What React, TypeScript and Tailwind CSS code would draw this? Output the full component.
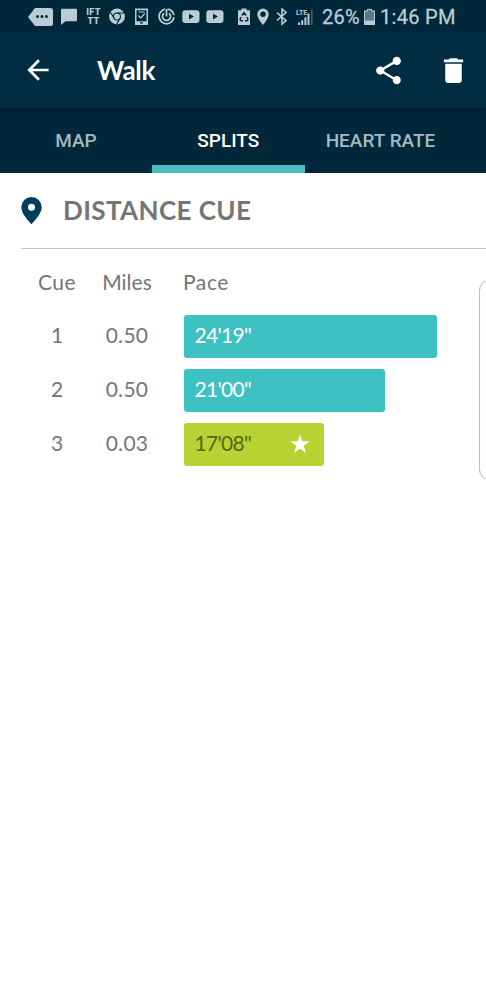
import type { ReactNode } from 'react'

type Split = {
  cue: number
  miles: string
  pace: string
  width: number
  best?: boolean
}

const splits: Split[] = [
  { cue: 1, miles: '0.50', pace: `24'19"`, width: 253 },
  { cue: 2, miles: '0.50', pace: `21'00"`, width: 201 },
  { cue: 3, miles: '0.03', pace: `17'08"`, width: 140.5, best: true },
]

const tabs = ['MAP', 'SPLITS', 'HEART RATE']

function StatusIcon({ w, className, children }: { w: number; className: string; children: ReactNode }) {
  return (
    <svg width={w} height={18} viewBox={`0 0 ${w} 18`} className={`shrink-0 ${className}`} fill="currentColor">
      {children}
    </svg>
  )
}

function YoutubeIcon({ className }: { className: string }) {
  return (
    <StatusIcon w={18} className={className}>
      <rect x="0.3" y="2.3" width="17.2" height="12.7" rx="3" />
      <path d="M7 5.8v5.6l5-2.8z" fill="#00283c" />
    </StatusIcon>
  )
}

function StatusBar() {
  return (
    <div className="flex h-[33px] items-center bg-[#00273a] pl-[28px] font-['Roboto',sans-serif] text-[#bacbd5]">
      <StatusIcon w={25} className="">
        <path d="M7 0h15.5A2.5 2.5 0 0 1 25 2.5v13a2.5 2.5 0 0 1-2.5 2.5H7L0 9z" />
        <g fill="#00283c">
          <circle cx="9.500" cy="8.500" r="1.500" />
          <circle cx="14" cy="8.500" r="1.500" />
          <circle cx="18.500" cy="8.500" r="1.500" />
        </g>
      </StatusIcon>
      <StatusIcon w={16} className="ml-[8px]">
        <path d="M1 .8h14a1 1 0 0 1 1 1v10.400a1 1 0 0 1-1 1H4.500L0 17V1.800a1 1 0 0 1 1-1z" />
      </StatusIcon>
      <div className="ml-[8px] flex w-[17px] flex-col items-center text-[9px] leading-[9px] font-black">
        <span className="tracking-[0.3px]">IFT</span>
        <span className="tracking-[0.3px]">TT</span>
      </div>
      <StatusIcon w={16} className="ml-[7px]">
        <circle cx="8" cy="8.500" r="7.900" />
        <g fill="none" stroke="#00283c" strokeWidth="1.100">
          <circle cx="8" cy="8.500" r="3.500" />
          <path d="M8 5h7M5 10.300 1.700 4.500M11 10.300 7.600 16.400" />
        </g>
      </StatusIcon>
      <StatusIcon w={13} className="ml-[10px]">
        <path d="M0 .5h13v16.500H0zM1.500 2.300v11h10v-11zM5 14.300v1.100h3v-1.100z" fillRule="evenodd" />
        <path d="m3.200 7.500 2.600 2.500 4-4.500M3.500 4h6" fill="none" stroke="currentColor" strokeWidth="1.200" />
      </StatusIcon>
      <StatusIcon w={17} className="ml-[10px]">
        <g fill="none" stroke="currentColor" strokeWidth="1.800">
          <path d="M7 1.200a7.400 7.400 0 1 0 8.900 8M15.900 7.200A7.500 7.500 0 0 0 9.500 1.200" />
          <path d="M6 5.300a4 4 0 1 0 5 0M8.500 1v7.500" />
        </g>
      </StatusIcon>
      <YoutubeIcon className="ml-[7px]" />
      <YoutubeIcon className="ml-[6px]" />
      <StatusIcon w={12} className="ml-[14px]">
        <path d="M3.500.5h5v1.800H12V17H0V2.300h3.500z" />
        <path d="m4 7.500 2-2.700 2 2.700M9 9l1 2.300-1 1.400H7M5 12.700H3L2 11.300 3.200 9" fill="none" stroke="#00283c" strokeWidth="1.400" />
      </StatusIcon>
      <StatusIcon w={12} className="ml-[7px]">
        <path d="M6 .5A5.700 5.700 0 0 0 .3 6.200C.3 10.500 6 17 6 17s5.700-6.500 5.700-10.800A5.700 5.700 0 0 0 6 .5zm0 3a2.700 2.700 0 1 1 0 5.400 2.700 2.700 0 0 1 0-5.400z" fillRule="evenodd" />
      </StatusIcon>
      <StatusIcon w={12} className="ml-[7px]">
        <path d="m1 4.700 9 8L6 16v-15l4 3.500-9 8" fill="none" stroke="currentColor" strokeWidth="1.600" />
      </StatusIcon>
      <StatusIcon w={17} className="ml-[8px]">
        <text x="0" y="6.700" fontSize="7" fontWeight="700" fontFamily="Roboto, sans-serif">LTE</text>
        <path d="M2 14.500h2V17H2zM5.200 12.200h2V17h-2zM8.400 9.200h2V17h-2zM11.500 5.500h2V17h-2z" />
        <path d="M15 1.500h1.600V17H15z" opacity=".35" />
      </StatusIcon>
      <span className="ml-[9px] w-[38px] pt-[2px] text-[20px] leading-[31px] tracking-[0.2px] whitespace-nowrap [-webkit-text-stroke:0.3px]">26%</span>
      <StatusIcon w={11} className="ml-[4px]">
        <path d="M3 1h5v1.600h3V17H0V2.600h3z" opacity=".5" />
        <path d="M0 12.500h11V17H0z" />
        <path d="M.5 17V3h3V1.400h4V3h3v14" fill="none" stroke="currentColor" />
      </StatusIcon>
      <span className="ml-[5px] pt-[2px] text-[20px] leading-[31px] tracking-[0.3px] whitespace-nowrap [-webkit-text-stroke:0.3px]">1:46 PM</span>
    </div>
  )
}

function Toolbar() {
  return (
    <header className="flex h-[75px] items-center bg-[#002d42] pl-[22px] text-white">
      <svg width="32" height="32" viewBox="0 0 24 24" fill="currentColor" className="mb-[2px]">
        <path d="M20 11H7.830l5.590-5.590L12 4l-8 8 8 8 1.410-1.410L7.830 13H20v-2z" />
      </svg>
      <h1 className="ml-[43px] flex-1 font-['Lato',sans-serif] text-[26px] font-bold tracking-[-0.3px]">Walk</h1>
      <svg width="33" height="33" viewBox="0 0 24 24" fill="currentColor" className="mb-[1px]">
        <path d="M18 16.080c-.76 0-1.440.3-1.960.77L8.910 12.700c.05-.23.09-.46.09-.7s-.04-.47-.09-.7l7.050-4.110c.54.5 1.250.81 2.040.81 1.660 0 3-1.340 3-3s-1.340-3-3-3-3 1.340-3 3c0 .24.04.47.09.7L8.040 9.810C7.500 9.310 6.790 9 6 9c-1.660 0-3 1.340-3 3s1.340 3 3 3c.79 0 1.500-.31 2.040-.81l7.120 4.160c-.05.21-.08.43-.08.65 0 1.610 1.310 2.920 2.920 2.920s2.920-1.310 2.920-2.920-1.310-2.920-2.920-2.920z" />
      </svg>
      <svg width="33" height="33" viewBox="0 0 24 24" fill="currentColor" className="mr-[16px] ml-[32px]">
        <path d="M6 19c0 1.100.9 2 2 2h8c1.100 0 2-.9 2-2V7H6v12zM19 4h-3.500l-1-1h-5l-1 1H5v2h14V4z" />
      </svg>
    </header>
  )
}

export default function App() {
  return (
    <div className="h-[999px] w-[486px] overflow-hidden bg-white font-['Lato',sans-serif] text-[#757575]">
      <StatusBar />
      <Toolbar />

      <nav className="flex h-[65px] bg-[#00273a] bg-linear-to-b from-[#002132] to-[#00273a] to-10% font-['Roboto',sans-serif] text-[19px] font-medium">
        {tabs.map((tab) => (
          <button
            key={tab}
            className={
              tab === 'SPLITS'
                ? 'w-[152.5px] border-b-8 border-[#4bbfc0] pt-[10px] text-white'
                : 'w-[152px] border-b-8 border-transparent pt-[10px] whitespace-nowrap text-[#a6b8c2]'
            }
          >
            {tab}
          </button>
        ))}
      </nav>

      <main className="relative">
        <div className="ml-[21px] flex h-[76px] items-center border-b border-[#c4c4c4]">
          <svg width="21" height="27" viewBox="0 0 21 27" fill="#003f5a">
            <path d="M10.500 0A10.200 10.200 0 0 0 .3 10.200C.3 17.500 10.500 27 10.500 27s10.200-9.500 10.200-16.800A10.200 10.200 0 0 0 10.500 0zm0 6.700a3.500 3.500 0 1 1 0 7 3.500 3.500 0 0 1 0-7z" fillRule="evenodd" />
          </svg>
          <h2 className="ml-[21px] text-[26px] font-bold tracking-[0.4px]">DISTANCE CUE</h2>
        </div>

        <div className="mt-[17px] flex h-[32px] items-center text-[21px]">
          <span className="ml-[27px] w-[60px] text-center tracking-[0.5px]">Cue</span>
          <span className="w-[80px] text-center">Miles</span>
          <span className="ml-[16px] tracking-[0.6px]">Pace</span>
        </div>

        <div className="mt-[16.5px] flex flex-col gap-[11px] text-[21px]">
          {splits.map((split) => (
            <div key={split.cue} className="flex h-[43px] items-center">
              <span className="ml-[27px] w-[60px] pb-[3px] text-center">{split.cue}</span>
              <span className="w-[80px] pb-[3px] text-center tracking-[0.3px]">{split.miles}</span>
              <div
                className={
                  split.best
                    ? 'ml-[16.5px] flex h-full items-center justify-between rounded-[3px] bg-[#b7d333] pr-[14px] pl-[11px] text-[#56661a]'
                    : 'ml-[16.5px] flex h-full items-center rounded-[3px] bg-[#3ec1c2] pl-[11px] text-white'
                }
                style={{ width: split.width }}
              >
                <span className="pb-[3px] tracking-[-0.7px]">{split.pace}</span>
                {split.best && (
                  <svg width="20" height="20" viewBox="0 0 20 20" fill="#fff" className="mb-[1px]">
                    <path d="m10 .3 2.300 7h7.400l-6 4.400 2.300 7.300-6-4.500L4 19l2.300-7.300-6-4.400h7.400z" />
                  </svg>
                )}
              </div>
            </div>
          ))}
        </div>

        {/* edge panel handle */}
        <div className="absolute top-[107px] left-[479px] h-[200px] w-[20px] rounded-[10px] border border-[#bdbdbd] bg-[#fdfdfd]" />
      </main>
    </div>
  )
}
